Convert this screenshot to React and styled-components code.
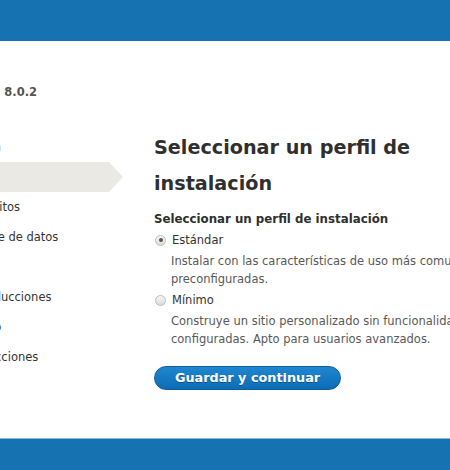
import React from 'react';
import styled, { createGlobalStyle } from 'styled-components';

const Global = createGlobalStyle`
  html, body {
    margin: 0;
    padding: 0;
    background: #1672b1;
  }
  body {
    min-height: 470px;
    font-family: "DejaVu Sans", Verdana, sans-serif;
    color: #333;
  }
`;

const Screen = styled.div`
  padding-top: 41px;
  height: 470px;
  box-sizing: border-box;
  overflow: hidden;
`;

const Page = styled.div`
  height: 397px;
  background: #fff;
  box-shadow: 0 1px 0 #8fbde0;
  display: flex;
  overflow: hidden;
`;

const Sidebar = styled.aside`
  flex: 0 0 209px;
  margin-left: -100px;
`;

const SiteName = styled.div`
  margin: 43px 0 32px 57px;
  font-size: 11.5px;
  line-height: 16px;
  font-weight: bold;
  color: #56544c;
`;

const Steps = styled.ol`
  list-style: none;
  margin: 0;
  padding: 0;
`;

const Step = styled.li`
  position: relative;
  height: 30px;
  line-height: 30px;
  padding-left: 13px;
  font-size: 11.5px;
  white-space: nowrap;
  color: ${p => (p.$done ? '#aaa' : '#333')};
  background: ${p => (p.$active ? '#ebe9e4' : 'transparent')};

  &::after {
    content: '';
    display: ${p => (p.$active ? 'block' : 'none')};
    position: absolute;
    top: 0;
    left: 100%;
    border-style: solid;
    border-width: 15px 0 15px 14px;
    border-color: transparent transparent transparent #ebe9e4;
  }
`;

const Main = styled.main`
  flex: 0 0 382px;
  margin-left: 45px;
  padding-top: 89px;
`;

const Title = styled.h1`
  margin: 0 0 8px;
  font-size: 19.2px;
  line-height: 36px;
  font-weight: bold;
  color: #2f2f2f;
  width: 300px;
`;

const Fieldset = styled.fieldset`
  border: 0;
  margin: 0;
  padding: 0;
`;

const Legend = styled.legend`
  padding: 0;
  font-size: 11.8px;
  line-height: 18px;
  font-weight: bold;
  color: #2f2f2f;
`;

const Option = styled.div`
  margin-top: 3px;
`;

const OptionLabel = styled.label`
  display: flex;
  align-items: center;
  gap: 6px;
  font-size: 11.5px;
  line-height: 18px;
  color: #333;
`;

const Radio = styled.input.attrs({ type: 'radio' })`
  appearance: none;
  margin: 0 0 0 1px;
  width: 11px;
  height: 11px;
  border-radius: 50%;
  border: 1px solid #bdbdbd;
  background: linear-gradient(#f6f6f6, #dcdcdc);
  box-sizing: border-box;
  display: grid;
  place-items: center;

  &:checked::before {
    content: '';
    width: 4px;
    height: 4px;
    border-radius: 50%;
    background: #555;
  }
`;

const Description = styled.div`
  margin: 3px 0 0 17px;
  font-size: 11.5px;
  line-height: 18px;
  color: #595959;
`;

const Actions = styled.div`
  margin-top: 18px;
`;

const Button = styled.button`
  border: 1px solid #0b5e9f;
  border-radius: 13px;
  background: linear-gradient(#1f86cf, #0c6db5);
  color: #fff;
  font-family: "DejaVu Sans", Verdana, sans-serif;
  font-weight: bold;
  font-size: 12.8px;
  line-height: 16px;
  padding: 3px 20px;
  text-shadow: 0 1px 0 rgba(0, 0, 0, 0.3);
  cursor: pointer;
`;

const steps = [
  { label: 'Escoger idioma', done: true },
  { label: 'Escoger perfil', active: true },
  { label: 'Verificar requisitos' },
  { label: 'Configurar base de datos' },
  { label: 'Instalar sitio' },
  { label: 'Configurar traducciones' },
  { label: 'Configurar sitio' },
  { label: 'Finalizar traducciones' },
];

export default function App() {
  return (
    <Screen>
      <Global />
      <Page>
        <Sidebar>
          <SiteName>Drupal 8.0.2</SiteName>
          <Steps>
            {steps.map(s => (
              <Step key={s.label} $done={s.done} $active={s.active}>
                {s.label}
              </Step>
            ))}
          </Steps>
        </Sidebar>
        <Main>
          <Title>Seleccionar un perfil de instalación</Title>
          <Fieldset>
            <Legend>Seleccionar un perfil de instalación</Legend>
            <Option>
              <OptionLabel>
                <Radio name="profile" defaultChecked />
                Estándar
              </OptionLabel>
              <Description>
                Instalar con las características de uso más comunes preconfiguradas.
              </Description>
            </Option>
            <Option>
              <OptionLabel>
                <Radio name="profile" />
                Mínimo
              </OptionLabel>
              <Description>
                Construye un sitio personalizado sin funcionalidades pre-configuradas. Apto para usuarios avanzados.
              </Description>
            </Option>
          </Fieldset>
          <Actions>
            <Button type="button">Guardar y continuar</Button>
          </Actions>
        </Main>
      </Page>
    </Screen>
  );
}
